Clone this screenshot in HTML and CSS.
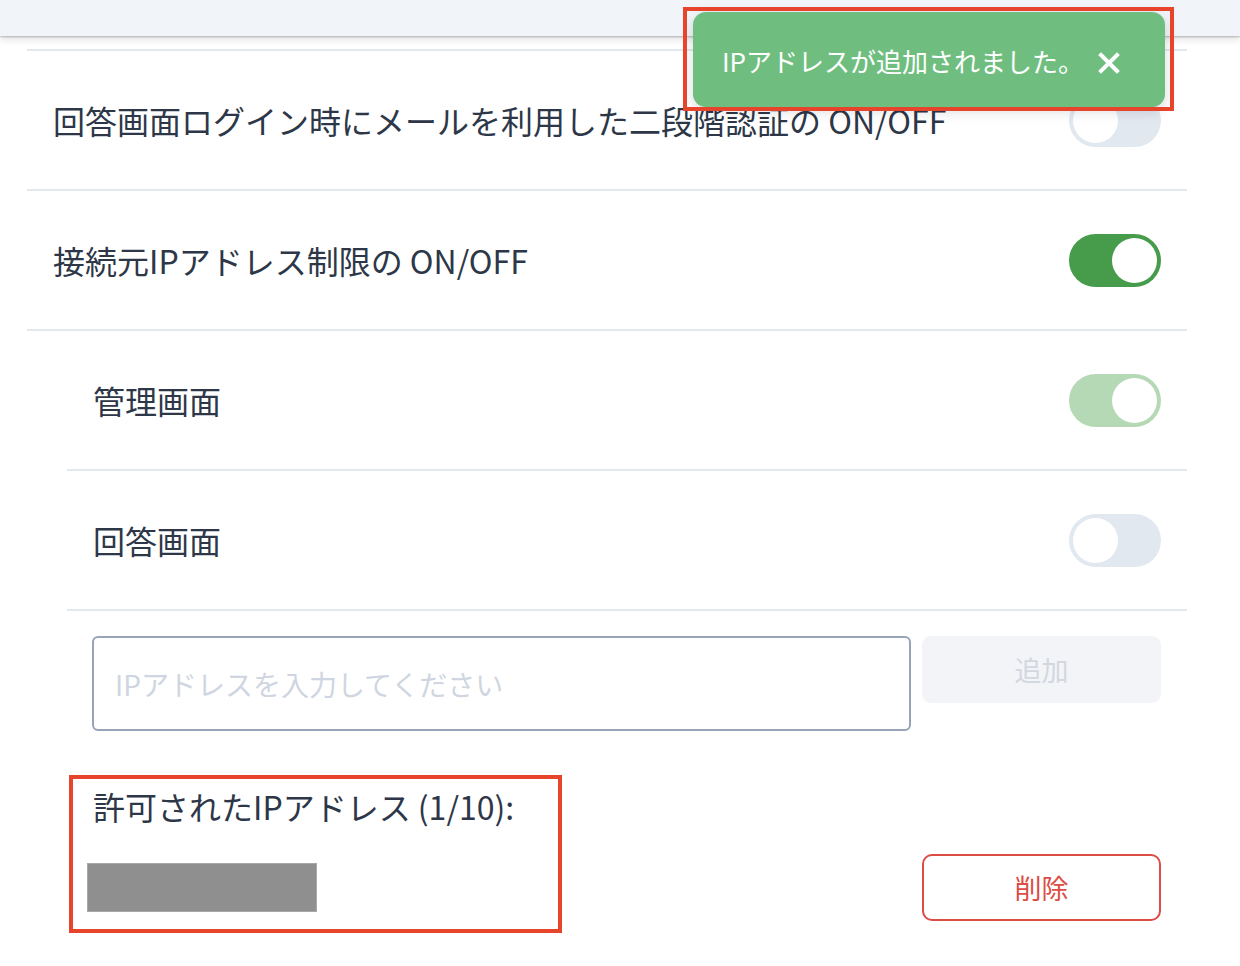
FILE: index.html
```html
<!DOCTYPE html>
<html lang="ja">
<head>
    <meta charset="UTF-8">
    <meta name="viewport" content="width=device-width, initial-scale=1.0">
    <title>セキュリティ設定</title>
    <link rel="stylesheet" href="styles.css">
</head>
<body>
    <header class="topbar"></header>

    <main class="settings">
        <!-- Two-factor login -->
        <div class="row">
            <span class="label">回答画面ログイン時にメールを利用した二段階認証の ON/OFF</span>
            <span class="toggle"><span class="knob"></span></span>
        </div>

        <!-- IP restriction -->
        <div class="row">
            <span class="label">接続元IPアドレス制限の ON/OFF</span>
            <span class="toggle on"><span class="knob"></span></span>
        </div>

        <div class="sub">
            <div class="sub-inner">
                <div class="sub-row">
                    <span class="label">管理画面</span>
                    <span class="toggle on light"><span class="knob"></span></span>
                </div>
                <div class="sub-row">
                    <span class="label">回答画面</span>
                    <span class="toggle"><span class="knob"></span></span>
                </div>

                <div class="ip-section">
                    <div class="ip-form">
                        <input class="ip-input" type="text" placeholder="IPアドレスを入力してください">
                        <button class="add-btn" disabled>追加</button>
                    </div>

                    <div class="allowed">
                        <div class="allowed-title">許可されたIPアドレス (1/10):</div>
                        <div class="allowed-item">
                            <span class="masked"></span>
                            <button class="delete-btn">削除</button>
                        </div>
                        <div class="highlight highlight-list"></div>
                    </div>
                </div>
            </div>
        </div>
    </main>

    <!-- Toast -->
    <div class="toast">
        <span class="toast-text">IPアドレスが追加されました。</span>
        <svg class="toast-close" width="22" height="22" viewBox="0 0 22 22">
            <path d="M3 3 L19 19 M19 3 L3 19" stroke="#fff" stroke-width="4" stroke-linecap="square" fill="none"/>
        </svg>
    </div>
    <div class="highlight highlight-toast"></div>
</body>
</html>
```

FILE: styles.css
```css
* {
    box-sizing: border-box;
}

body {
    margin: 0;
    background: #fff;
    font-family: "Noto Sans CJK JP", "Noto Sans", sans-serif;
    color: #2d3748;
}

.topbar {
    height: 36px;
    background-color: #f1f4f9;
    box-shadow: 0 1px 2px rgba(0, 0, 0, 0.25), 0 3px 8px rgba(0, 0, 0, 0.12);
    position: relative;
    z-index: 2;
}

.settings {
    width: 1160px;
    margin: 13px 0 0 27px;
    padding-bottom: 60px;
}

.label {
    font-size: 32px;
    line-height: 48px;
    padding-bottom: 1px;
}

.row,
.sub-row {
    display: flex;
    justify-content: space-between;
    align-items: center;
    height: 140px;
    padding: 0 26px;
    border-top: 2px solid #e2e8f0;
}

.sub {
    border-top: 2px solid #e2e8f0;
}

.sub-inner {
    margin-left: 40px;
}

.sub-row:first-child {
    border-top: none;
    height: 138px;
}

/* toggle switch */
.toggle {
    display: flex;
    align-items: center;
    width: 92px;
    height: 53px;
    padding: 4px;
    border-radius: 27px;
    background-color: #e2e8f0;
}

.toggle .knob {
    width: 45px;
    height: 45px;
    border-radius: 50%;
    background-color: #fff;
}

.toggle.on {
    justify-content: flex-end;
    background-color: #469c4a;
}

.toggle.on.light {
    background-color: #b5d8b5;
}

/* ip form */
.ip-section {
    border-top: 2px solid #e2e8f0;
    padding: 25px 26px 0 25px;
}

.ip-form {
    display: flex;
    align-items: flex-start;
    gap: 11px;
}

.ip-input {
    flex: 1;
    height: 95px;
    border: 2px solid #97a3b6;
    border-radius: 6px;
    padding: 0 21px;
    font-family: inherit;
    font-size: 28px;
    color: #2d3748;
    outline: none;
}

.ip-input::placeholder {
    color: #cfd6e1;
}

.add-btn {
    width: 239px;
    height: 67px;
    border: none;
    border-radius: 9px;
    background-color: #f3f4f8;
    color: #d3d7de;
    font-family: inherit;
    font-size: 27px;
}

.allowed {
    position: relative;
    margin-top: 51px;
}

.allowed-title {
    font-size: 32px;
    line-height: 48px;
    padding-left: 1px;
}

.allowed-item {
    display: flex;
    justify-content: space-between;
    align-items: center;
    margin-top: 24px;
}

.masked {
    width: 230px;
    height: 49px;
    margin-left: -5px;
    background-color: #8f8f8f;
    border: 1px solid #a8a8a8;
}

.delete-btn {
    width: 239px;
    height: 67px;
    border: 2px solid #db4d45;
    border-radius: 10px;
    background-color: #fff;
    color: #db4d45;
    font-family: inherit;
    font-size: 27px;
}

/* toast */
.toast {
    position: absolute;
    top: 12px;
    left: 693px;
    width: 472px;
    height: 95px;
    display: flex;
    align-items: center;
    justify-content: space-between;
    padding: 0 45px 0 29px;
    border-radius: 13px;
    background-color: #6fbe80;
    box-shadow: 0 4px 14px rgba(0, 0, 0, 0.15);
    color: #fff;
    z-index: 3;
}

.toast-text {
    font-size: 26px;
    padding-top: 2px;
}

.toast-close {
    margin-top: 6px;
}

/* red annotation frames */
.highlight {
    position: absolute;
    border: 4px solid #e6452b;
    pointer-events: none;
}

.highlight-toast {
    top: 7px;
    left: 683px;
    width: 491px;
    height: 104px;
    z-index: 4;
}

.highlight-list {
    top: -7px;
    left: -23px;
    width: 493px;
    height: 158px;
}
```
